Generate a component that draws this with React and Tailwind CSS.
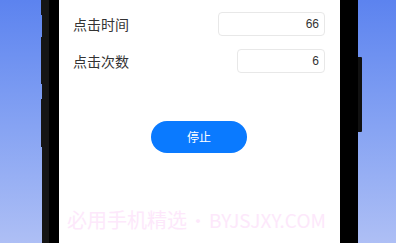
export default function App() {
  return (
    <div className="relative w-[396px] h-[243px] overflow-hidden flex bg-gradient-to-b from-[#5c83ef] to-[#aebff5] font-['Noto_Sans_CJK_SC',sans-serif]">
      {/* left background */}
      <div className="w-[42px] shrink-0" />

      {/* phone frame */}
      <div className="relative flex w-[316px] shrink-0">
        <div className="w-[7px] bg-[#151515]" />
        <div className="w-[10px] bg-black" />

        {/* screen */}
        <div className="relative w-[281px] bg-white pl-[14px] pr-[15px]">
          <div className="mt-[12px] h-[24px] flex items-center justify-between">
            <span className="text-[14px] text-[#333]">点击时间</span>
            <div className="w-[107px] h-[24px] border border-[#e8e8e8] rounded-[4px] flex items-center justify-end pr-[5px] text-[12px] text-[#333] font-['Liberation_Sans',sans-serif]">
              66
            </div>
          </div>
          <div className="mt-[13px] h-[24px] flex items-center justify-between">
            <span className="text-[14px] text-[#333]">点击次数</span>
            <div className="w-[88px] h-[24px] border border-[#e8e8e8] rounded-[4px] flex items-center justify-end pr-[5px] text-[12px] text-[#333] font-['Liberation_Sans',sans-serif]">
              6
            </div>
          </div>
          <div className="mt-[48px] flex justify-center">
            <button className="w-[96px] h-[32px] rounded-full bg-[#0a7aff] text-white text-[12px]">
              停止
            </button>
          </div>
        </div>

        <div className="w-[18px] bg-black" />

        {/* side buttons */}
        <div className="absolute left-[-1px] top-0 w-[2px] h-[15px] bg-[#151515]" />
        <div className="absolute left-[-1px] top-[37px] w-[2px] h-[47px] bg-[#151515]" />
        <div className="absolute left-[-1px] top-[99px] w-[2px] h-[48px] bg-[#151515]" />
        <div className="absolute right-[-4px] top-[57px] w-[4px] h-[75px] bg-[#111] rounded-r-[1px]" />
      </div>

      {/* watermark */}
      <div className="absolute left-[67px] top-[206px] flex items-center text-[20px] leading-[28px] text-[#fde8fb] whitespace-nowrap">
        <span>必用手机精选</span>
        <span className="w-[22px] flex justify-center text-[18px]">•</span>
        <span className="text-[19px]">BYJSJXY.COM</span>
      </div>
    </div>
  );
}
